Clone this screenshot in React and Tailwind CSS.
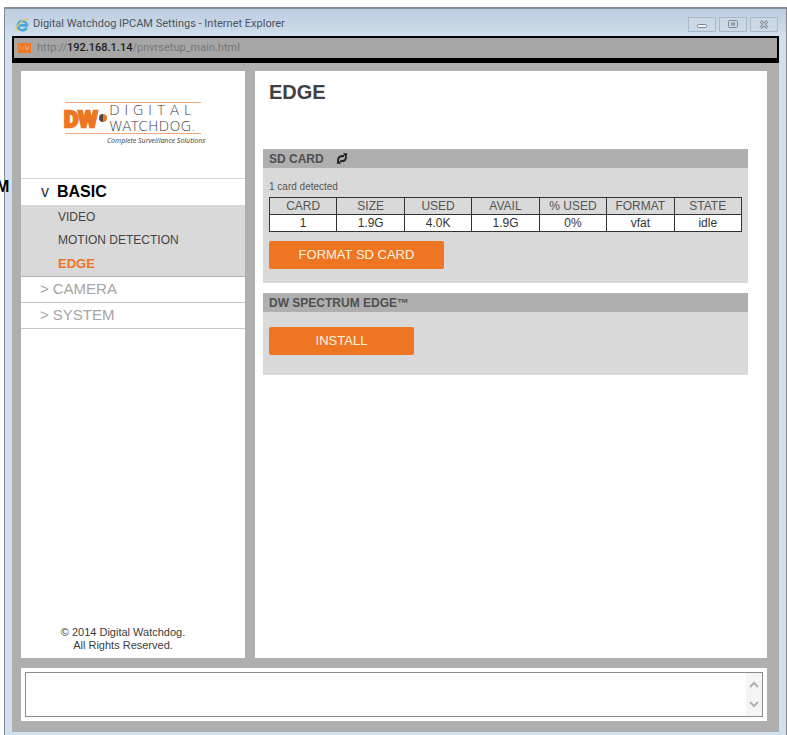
import React from 'react';

const columns = ['CARD', 'SIZE', 'USED', 'AVAIL', '% USED', 'FORMAT', 'STATE'];
const cards = [['1', '1.9G', '4.0K', '1.9G', '0%', 'vfat', 'idle']];

function Logo() {
  return (
    <svg width="150" height="50" viewBox="0 0 150 50" role="img" aria-label="Digital Watchdog">
      <path d="M2 2.5H138M2 33.5H138" stroke="#f0a878" strokeWidth="1" />
      <text x="1" y="27" fontSize="22" fontWeight="700" fill="#ee7623" stroke="#ee7623" strokeWidth="2.5" fontFamily="Roboto, 'Liberation Sans', sans-serif">DW</text>
      <path d="M40 14a4 4 0 0 0 0 8z" fill="#4a4a4a" />
      <path d="M40 14a4 4 0 0 1 0 8z" fill="#ee7623" />
      <g fontFamily="'DejaVu Sans', sans-serif" fontWeight="200" fill="#3c3c3c">
        <text x="46" y="15" fontSize="14">D I G I T A L</text>
        <text x="46" y="31" fontSize="14">WATCHDOG.</text>
      </g>
      <text x="44" y="43" fontSize="7" fontStyle="italic" fill="#3c3c3c" fontFamily="'Open Sans', sans-serif">Complete Surveillance Solutions</text>
    </svg>
  );
}

function BrowserIcon() {
  return (
    <svg width="14" height="14" viewBox="0 0 14 14" fill="none">
      <path d="M11.6 9.6A4.6 4.6 0 1 1 12 7.400H4" stroke="#45a9dc" strokeWidth="2.6" />
      <path d="M1.5 12.8C-.6 9.5 9.5-.8 13 1.6" stroke="#e6c65a" strokeWidth="1.4" />
    </svg>
  );
}

function WindowButton({ label, children }) {
  return (
    <button aria-label={label} className="flex h-[15px] w-7 items-center justify-center border border-[#a9b8c8] bg-[#cbd8e6]">
      <svg width="12" height="9" viewBox="0 0 12 9" fill="none" stroke="#7d858f">{children}</svg>
    </button>
  );
}

function Section({ title, icon, children }) {
  return (
    <section className="bg-[#d9d9d9]">
      <h2 className="flex h-[19px] items-center gap-3 bg-[#afafaf] px-[6px] text-[12px] font-bold text-[#505050]">
        {title}
        {icon}
      </h2>
      <div className="px-[6px]">{children}</div>
    </section>
  );
}

function SideGroup({ label }) {
  return (
    <a href="#" className="flex h-[26px] items-center gap-1 border-b border-[#c4c4c4] pl-[19px] text-[15px] text-[#a5a5a5]">
      <span>&gt;</span>
      {label}
    </a>
  );
}

export default function App() {
  return (
    <div className="flex min-h-screen bg-white pt-[7px] pl-1 font-['Liberation_Sans',Arial,sans-serif]">
      <span className="absolute top-[177px] left-[-4px] z-10 text-[16px] leading-5 font-bold text-black">M</span>

      <div className="flex grow flex-col border-t-2 border-r border-l border-[#858c95] bg-[#d0e0ec] px-[7px] pb-[3px]">
        {/* Title bar */}
        <header className="-mx-[7px] flex h-[27px] items-center gap-1 bg-linear-to-b from-[#bccde0] to-[#d0deec] pt-1 pr-2 pl-[10px]">
          <BrowserIcon />
          <h1 className="grow font-[Roboto,sans-serif] text-[11px] text-[#4c545e]">
            Digital Watchdog IPCAM Settings - Internet Explorer
          </h1>
          <div className="flex gap-[3px]">
            <WindowButton label="Minimize"><rect x="1.5" y="4.5" width="9" height="3" rx="1" fill="#f2f5f8" /></WindowButton>
            <WindowButton label="Maximize"><rect x="1.5" y=".5" width="9" height="7" rx="1" /><rect x="4.5" y="3" width="3" height="2" /></WindowButton>
            <WindowButton label="Close"><path d="M2.5 1l7 7M9.5 1l-7 7" strokeWidth="3" /><path d="M2.5 1l7 7M9.5 1l-7 7" stroke="#eef2f6" /></WindowButton>
          </div>
        </header>

        {/* Address bar */}
        <div className="flex h-[27px] shrink-0 items-center gap-[6px] border-2 border-b-[5px] border-black bg-[#a6a6a6] pl-1 font-[Roboto,sans-serif] text-[11px] text-[#777]">
          <svg width="13" height="11" viewBox="0 0 13 11">
            <rect width="13" height="10" fill="#ee7623" />
            <path d="M2 2v5M5 3v4M7 2l1 5 1-3 1 3 1-5" stroke="#f39a55" fill="none" />
          </svg>
          <p>http://<span className="font-medium text-[#1c1c1c]">192.168.1.14</span>/pnvrsetup_main.html</p>
        </div>

        <div className="flex grow flex-col gap-[10px] bg-[#afafaf] pt-2 pr-3 pb-[11px] pl-[9px]">
          <div className="flex grow gap-[10px]">
            {/* Sidebar */}
            <aside className="flex w-[224px] shrink-0 flex-col bg-white">
              <div className="flex h-[108px] items-center border-b border-[#d4d4d4] pl-[42px]">
                <Logo />
              </div>
              <nav>
                <a href="#" className="flex h-[26px] items-center gap-2 pl-5 text-[16px] font-bold text-black">
                  <span className="font-normal text-[#333]">v</span>
                  BASIC
                </a>
                <ul className="border-b border-[#b4b4b4] bg-[#d9d9d9] pt-px pl-[37px] text-[12px] leading-[23px] text-[#454545]">
                  <li><a href="#">VIDEO</a></li>
                  <li><a href="#">MOTION DETECTION</a></li>
                  <li><a href="#" className="text-[13px] font-bold text-[#ee7623]">EDGE</a></li>
                </ul>
                <SideGroup label="CAMERA" />
                <SideGroup label="SYSTEM" />
              </nav>
              <footer className="mt-auto pr-5 pb-[6px] text-center text-[11px] leading-[13px] text-[#3c3c3c]">
                <p>© 2014 Digital Watchdog.</p>
                <p>All Rights Reserved.</p>
              </footer>
            </aside>

            {/* Settings */}
            <main className="flex grow flex-col gap-[10px] bg-white pr-[19px] pl-2">
              <h1 className="h-[68px] px-[6px] pt-[9px] text-[20px] leading-6 font-bold text-[#404040]">EDGE</h1>
              <Section
                title="SD CARD"
                icon={
                  <button aria-label="Refresh">
                    <svg width="12" height="11" viewBox="0 0 12 11" fill="none" stroke="#222" strokeWidth="2">
                      <path d="M2 8C2 4.500 3.500 2.800 8 3M10 4C10 7 8.500 8.500 4 8.200" />
                      <path d="M7 0l4.500.5-1.500 4.500zM5 11L.5 10.500 2 6z" fill="#222" stroke="none" />
                    </svg>
                  </button>
                }
              >
                <p className="pt-[13px] text-[10px] leading-3 text-[#555]">1 card detected</p>
                <table className="mt-1 w-full table-fixed border-collapse text-center text-[12px] leading-4 text-[#333]">
                  <thead>
                    <tr>
                      {columns.map((name) => (
                        <th key={name} className="border border-[#333] p-0 font-normal text-[#555]">{name}</th>
                      ))}
                    </tr>
                  </thead>
                  <tbody>
                    {cards.map((card) => (
                      <tr key={card[0]} className="bg-white">
                        {card.map((value, i) => (
                          <td key={i} className="border border-[#333] p-0">{value}</td>
                        ))}
                      </tr>
                    ))}
                  </tbody>
                </table>
                <button className="mt-[9px] mb-[14px] block h-7 w-[175px] rounded-xs bg-[#ee7623] text-[13px] text-[#fff3e0]">FORMAT SD CARD</button>
              </Section>
              <Section title="DW SPECTRUM EDGE™">
                <button className="mt-[15px] mb-5 block h-7 w-[145px] rounded-xs bg-[#ee7623] text-[13px] text-[#fff3e0]">INSTALL</button>
              </Section>
            </main>
          </div>

          {/* Message log */}
          <div className="flex bg-white p-1">
            <div className="flex h-[45px] grow border border-[#8c8c8c]">
              <textarea aria-label="Messages" readOnly className="grow resize-none outline-none" />
              <div className="flex w-4 flex-col items-center justify-between bg-[#f5f5f5] py-2">
                <svg width="10" height="7" viewBox="0 0 10 7" fill="none" stroke="#b0b0b0" strokeWidth="2"><path d="M1 6l4-4 4 4" /></svg>
                <svg width="10" height="7" viewBox="0 0 10 7" fill="none" stroke="#b0b0b0" strokeWidth="2"><path d="M1 1l4 4 4-4" /></svg>
              </div>
            </div>
          </div>
        </div>
      </div>
    </div>
  );
}
